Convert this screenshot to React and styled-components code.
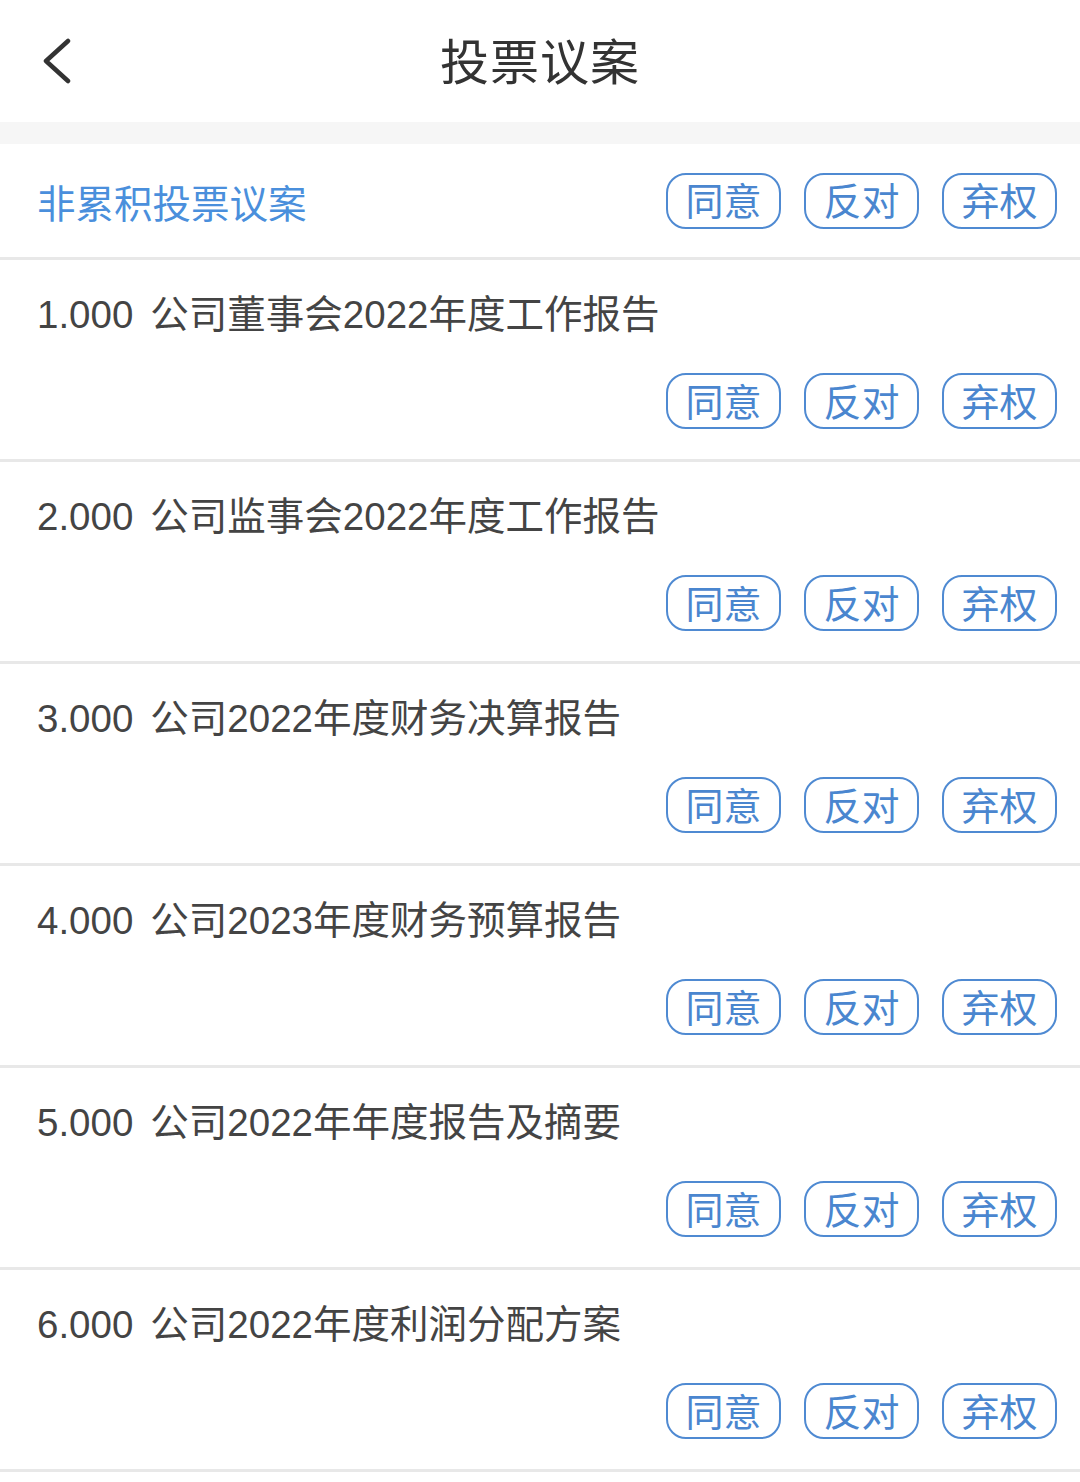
import React from 'react';
import styled, { createGlobalStyle } from 'styled-components';

const GlobalStyle = createGlobalStyle`
  html, body {
    margin: 0;
    padding: 0;
    background: #ffffff;
  }
  body {
    font-family: "Liberation Sans", "Noto Sans CJK SC", sans-serif;
  }
`;

const Page = styled.div`
  width: 1080px;
  min-height: 1482px;
  background: #ffffff;
`;

const NavBar = styled.header`
  display: grid;
  grid-template-columns: 1fr auto 1fr;
  align-items: center;
  height: 122px;
  padding: 0 36px;
  box-sizing: border-box;
`;

const BackButton = styled.button`
  justify-self: start;
  display: flex;
  align-items: center;
  justify-content: center;
  width: 40px;
  height: 50px;
  padding: 0;
  border: none;
  background: none;
  cursor: pointer;
`;

const Title = styled.h1`
  margin: 0 0 6px;
  font-family: "Noto Sans CJK SC", sans-serif;
  font-weight: 400;
  font-size: 49px;
  letter-spacing: 1px;
  color: #333333;
`;

const Band = styled.div`
  height: 22px;
  background: #f6f6f6;
`;

const SectionHead = styled.div`
  display: flex;
  align-items: center;
  justify-content: space-between;
  height: 113px;
  padding: 0 23px 0 37px;
  border-bottom: 3px solid #e8e8e8;
`;

const SectionTitle = styled.span`
  font-family: "Noto Sans CJK SC", sans-serif;
  font-size: 38.5px;
  color: #4a8fdc;
`;

const Choices = styled.div`
  display: flex;
  gap: 23px;
`;

const Choice = styled.button`
  display: flex;
  align-items: center;
  justify-content: center;
  width: 115px;
  height: 56px;
  box-sizing: border-box;
  padding: 0 0 3px;
  border: 2.5px solid #4f8ad2;
  border-radius: 20px;
  background: #ffffff;
  font-family: "Noto Sans CJK SC", sans-serif;
  font-size: 38px;
  line-height: 1;
  color: #4a86cf;
  cursor: pointer;
`;

const Item = styled.div`
  display: flex;
  flex-direction: column;
  padding: 30px 23px 30px 37px;
  border-bottom: 3px solid #e8e8e8;
`;

const ItemTitle = styled.div`
  height: 50px;
  line-height: 50px;
  font-size: 38.5px;
  color: #444444;
  white-space: nowrap;
`;

const Num = styled.span`
  margin-right: 17px;
`;

const ItemChoices = styled(Choices)`
  align-self: flex-end;
  margin-top: 33px;
`;

const motions = [
  '公司董事会2022年度工作报告',
  '公司监事会2022年度工作报告',
  '公司2022年度财务决算报告',
  '公司2023年度财务预算报告',
  '公司2022年年度报告及摘要',
  '公司2022年度利润分配方案',
];

const options = ['同意', '反对', '弃权'];

const VoteButtons = ({ as: Wrap = Choices }) => (
  <Wrap>
    {options.map((o) => (
      <Choice key={o}>{o}</Choice>
    ))}
  </Wrap>
);

export default function App() {
  return (
    <Page>
      <GlobalStyle />
      <NavBar>
        <BackButton aria-label="返回">
          <svg width="32" height="46" viewBox="0 0 32 46" fill="none">
            <path d="M28 3 L6 23 L28 43" stroke="#333" strokeWidth="4.5" strokeLinecap="round" strokeLinejoin="round" />
          </svg>
        </BackButton>
        <Title>投票议案</Title>
        <span />
      </NavBar>
      <Band />
      <SectionHead>
        <SectionTitle>非累积投票议案</SectionTitle>
        <VoteButtons />
      </SectionHead>
      {motions.map((m, i) => (
        <Item key={m}>
          <ItemTitle>
            <Num>{`${i + 1}.000`}</Num>
            {m}
          </ItemTitle>
          <VoteButtons as={ItemChoices} />
        </Item>
      ))}
    </Page>
  );
}
